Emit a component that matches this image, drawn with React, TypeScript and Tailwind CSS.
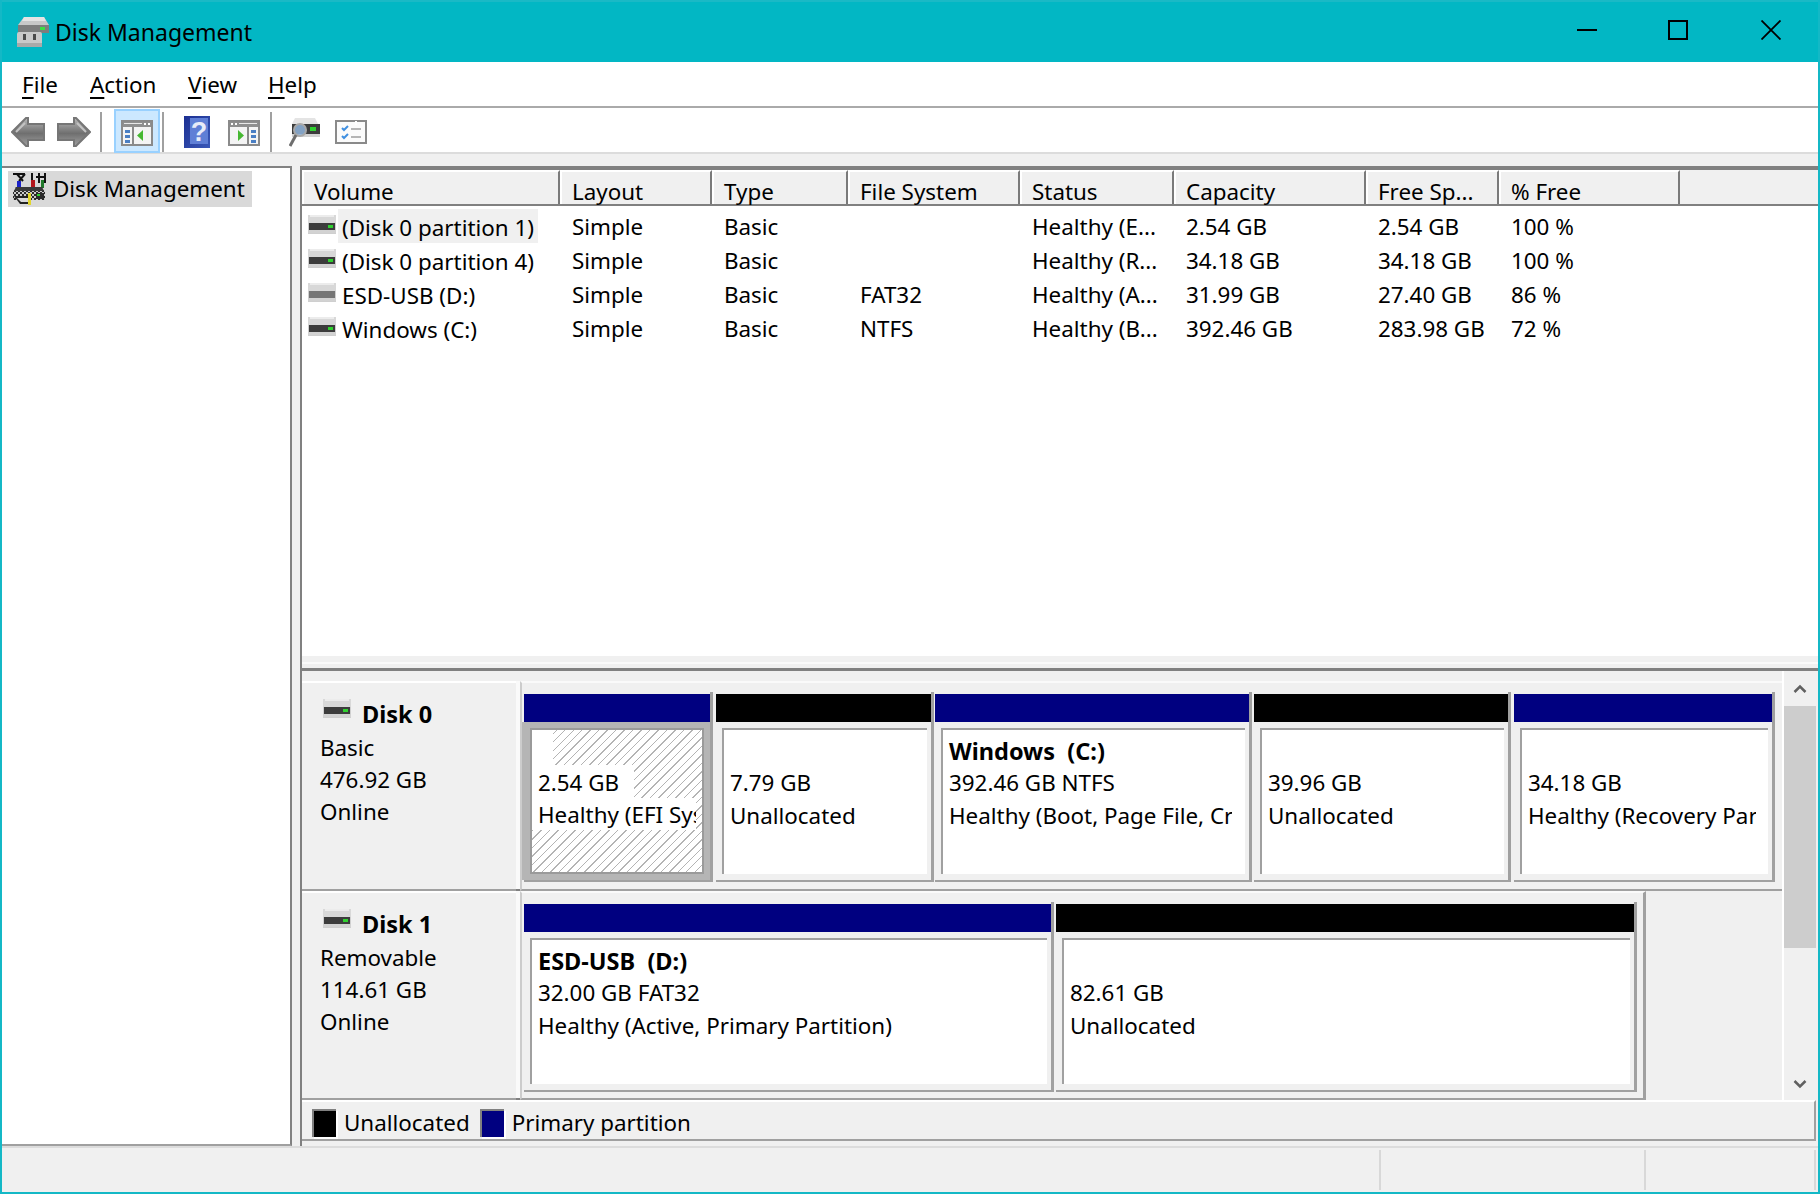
import React from "react";

const COLS = [
  { name: "Volume", w: "w-[258px]" },
  { name: "Layout", w: "w-[152px]" },
  { name: "Type", w: "w-[136px]" },
  { name: "File System", w: "w-[172px]" },
  { name: "Status", w: "w-[154px]" },
  { name: "Capacity", w: "w-[192px]" },
  { name: "Free Sp...", w: "w-[133px]" },
  { name: "% Free", w: "w-[181px]" },
];

const ROWS = [
  { led: true, selected: true, cells: ["(Disk 0 partition 1)", "Simple", "Basic", "", "Healthy (E...", "2.54 GB", "2.54 GB", "100 %"] },
  { led: true, selected: false, cells: ["(Disk 0 partition 4)", "Simple", "Basic", "", "Healthy (R...", "34.18 GB", "34.18 GB", "100 %"] },
  { led: false, selected: false, cells: ["ESD-USB (D:)", "Simple", "Basic", "FAT32", "Healthy (A...", "31.99 GB", "27.40 GB", "86 %"] },
  { led: true, selected: false, cells: ["Windows (C:)", "Simple", "Basic", "NTFS", "Healthy (B...", "392.46 GB", "283.98 GB", "72 %"] },
];

function DriveIcon({ led = true }: { led?: boolean }) {
  return (
    <svg width="28" height="20" viewBox="0 0 28 20" className="shrink-0">
      <path d="M3 0h22l3 6v13H0V6z" fill="#cfcfcf" />
      <rect x="0" y="0" width="28" height="8" fill="#d8d8d8" />
      <rect x="2" y="0" width="24" height="2" fill="#ececec" />
      <rect x="1" y="8" width="26" height="7" fill={led ? "#3c3c3c" : "#767676"} />
      {led && <rect x="20" y="10" width="5" height="3" fill="#2fd12f" />}
      <rect x="0" y="15" width="28" height="3" fill="#d2d2d2" />
    </svg>
  );
}

function TitleIcon() {
  return (
    <svg width="34" height="32" viewBox="0 0 34 32" className="shrink-0">
      <path d="M8 1h20l5 8v8H2V9z" fill="#c8c8c8" />
      <path d="M8 1h20l2 4H6z" fill="#e4e4e4" />
      <rect x="2" y="9" width="31" height="8" fill="#7d7d7d" />
      <rect x="24" y="11" width="5" height="3" fill="#3ddc45" />
      <rect x="1" y="16" width="25" height="15" rx="2" fill="#c9c9c9" />
      <rect x="7" y="18" width="3" height="6" fill="#4a4a4a" />
      <rect x="17" y="18" width="3" height="6" fill="#4a4a4a" />
      <rect x="1" y="27" width="25" height="4" fill="#a9a9a9" />
    </svg>
  );
}

function TreeIcon() {
  return (
    <svg width="34" height="34" viewBox="0 0 34 34" className="shrink-0">
      <defs>
        <pattern id="dither" width="4" height="4" patternUnits="userSpaceOnUse">
          <rect width="4" height="4" fill="#c8c8c8" />
          <rect width="2" height="2" fill="#2a2a2a" />
          <rect x="2" y="2" width="2" height="2" fill="#2a2a2a" />
        </pattern>
      </defs>
      <path d="M1 2h12M5 2l6 7M13 2L7 9M20 1v10M27 1v10M33 1v10M24 5h8" stroke="#111" strokeWidth="2" />
      <rect x="5" y="9" width="4" height="7" fill="#1b22c8" />
      <rect x="19" y="8" width="4" height="8" fill="#b4161c" />
      <rect x="29" y="8" width="3" height="8" fill="#1f7a2a" />
      <path d="M4 15h26l3 5v8H1v-8z" fill="url(#dither)" />
      <path d="M4 15h26l2 4H2z" fill="#3a3a3a" />
      <rect x="24" y="21" width="8" height="6" fill="#2b2b2b" />
      <rect x="25" y="22" width="3" height="2" fill="#2fd12f" />
      <path d="M2 24l6 8h10v-8z" fill="#222" />
      <path d="M5 26l4 4h7v-4z" fill="#d8d8d8" />
      <rect x="16" y="21" width="3" height="12" fill="#e2d62c" />
    </svg>
  );
}

function ArrowIcon({ flip = false }: { flip?: boolean }) {
  const id = flip ? "arrowR" : "arrowL";
  return (
    <svg width="34" height="30" viewBox="0 0 34 30" className={flip ? "shrink-0 -scale-x-100" : "shrink-0"}>
      <defs>
        <linearGradient id={id} x1="0" y1="0" x2="0" y2="1">
          <stop offset="0" stopColor="#b9b9b9" />
          <stop offset="0.55" stopColor="#6f6f6f" />
          <stop offset="1" stopColor="#a0a0a0" />
        </linearGradient>
      </defs>
      <path d="M1 15L15 1h2v6h16v16H17v6h-2z" fill={`url(#${id})`} stroke="#767676" strokeWidth="2" />
      <path d="M5 15L14 6" stroke="#c4c4c4" strokeWidth="2" />
    </svg>
  );
}

function PaneIcon({ flip = false }: { flip?: boolean }) {
  return (
    <svg width="32" height="26" viewBox="0 0 32 26" className={flip ? "shrink-0 -scale-x-100" : "shrink-0"}>
      <rect x="1" y="1" width="30" height="24" fill="#f4f4f4" stroke="#8a8a8a" strokeWidth="2" />
      <rect x="2" y="2" width="28" height="5" fill="#8f8f8f" />
      <rect x="3" y="3" width="18" height="1" fill="#e8e8e8" />
      <rect x="23" y="3" width="2" height="2" fill="#fff" />
      <rect x="27" y="3" width="2" height="2" fill="#fff" />
      <rect x="11" y="7" width="2" height="18" fill="#8a8a8a" />
      <rect x="4" y="10" width="5" height="3" fill="#4a7fc4" />
      <rect x="4" y="15" width="5" height="3" fill="#4a7fc4" />
      <rect x="4" y="20" width="5" height="3" fill="#4a7fc4" />
      <path d="M22 10v11l-6-5.500z" fill="#46b832" />
    </svg>
  );
}

function HelpIcon() {
  return (
    <svg width="26" height="32" viewBox="0 0 26 32" className="shrink-0">
      <defs>
        <linearGradient id="helpBg" x1="0" y1="0" x2="1" y2="1">
          <stop offset="0" stopColor="#1b2f92" />
          <stop offset="1" stopColor="#3b59b8" />
        </linearGradient>
      </defs>
      <rect width="26" height="32" fill="url(#helpBg)" />
      <rect x="6" y="2" width="18" height="26" fill="#5f7fd6" />
      <text x="15" y="25" textAnchor="middle" fontFamily="'Liberation Sans', sans-serif" fontWeight="700" fontSize="27" fill="#e8ecf8">?</text>
    </svg>
  );
}

function ScanIcon() {
  return (
    <svg width="32" height="30" viewBox="0 0 32 30" className="shrink-0">
      <path d="M6 1h20l3 6H3z" fill="#e4e4e4" />
      <rect x="3" y="7" width="28" height="10" fill="#3c3c3c" />
      <rect x="21" y="10" width="6" height="4" fill="#2fd12f" />
      <rect x="3" y="17" width="28" height="3" fill="#d2d2d2" />
      <circle cx="11" cy="13" r="6" fill="#8fb4dc" fillOpacity="0.85" stroke="#a8a8a8" strokeWidth="2" />
      <path d="M7 18L1 29" stroke="#6e6e6e" strokeWidth="3" />
    </svg>
  );
}

function ChecklistIcon() {
  return (
    <svg width="32" height="24" viewBox="0 0 32 24" className="shrink-0">
      <rect x="1" y="1" width="30" height="22" fill="#fbfbfb" stroke="#8a8a8a" strokeWidth="2" />
      <rect x="20" y="1" width="2" height="4" fill="#fff" />
      <path d="M7 8l2 2 4-4M7 16l2 2 4-4" fill="none" stroke="#3f8fe0" strokeWidth="2" />
      <path d="M16 9h10M16 17h10" stroke="#b5b5b5" strokeWidth="2" />
    </svg>
  );
}

function Accel({ k, rest }: { k: string; rest: string }) {
  return (
    <span>
      <span className="underline decoration-[1.5px] underline-offset-[4px]">{k}</span>
      {rest}
    </span>
  );
}

function Partition({ w, barW, color, name, size, status, selected, hatchWidths, pad = "pr-[8px]" }: {
  w: string;
  barW: string;
  color: string;
  name?: string;
  size: string;
  status: string;
  selected?: boolean;
  hatchWidths?: string[];
  pad?: string;
}) {
  return (
    <div className={`${w} shrink-0`}>
      <div className={`h-[190px] pt-[2px] flex flex-col border-r-[3px] border-b-2 border-[#a0a0a0] ${barW}`}>
        <div className={`h-[28px] ${color}`} />
        {selected && hatchWidths ? (
          <div className="flex-1 -ml-[2px] p-[6px] pl-[8px] pb-[6px] bg-[#b5b5b5] min-h-0">
            <div className="h-full border-2 border-[#9a9a9a] bg-[repeating-linear-gradient(135deg,#ffffff_0px,#ffffff_5px,#b4b4b4_5px,#b4b4b4_6px)]">
              <div className={`h-[35px] bg-white ${hatchWidths[0]}`} />
              <div className={`h-[33px] pl-[6px] leading-[35px] bg-white ${hatchWidths[1]}`}>{size}</div>
              <div className={`h-[32px] pl-[6px] leading-[33px] bg-white whitespace-nowrap overflow-hidden ${hatchWidths[2]}`}>{status}</div>
            </div>
          </div>
        ) : (
          <div className="flex-1 pl-[6px] pt-[6px] pr-[4px] pb-[6px] min-h-0">
            <div className="h-full border-l-2 border-t-2 border-[#a0a0a0] bg-white pt-[3px] leading-[34px]">
              <div className="h-[33px] pl-[6px] pt-[1px] font-bold text-[23.5px] whitespace-pre">{name ?? ""}</div>
              <div className="h-[33px] pl-[6px] whitespace-nowrap">{size}</div>
              <div className={`h-[33px] ml-[6px] ${pad} overflow-hidden`}>
                <div className="whitespace-nowrap">{status}</div>
              </div>
            </div>
          </div>
        )}
      </div>
    </div>
  );
}

function DiskLabel({ title, lines }: { title: string; lines: string[] }) {
  return (
    <>
      <div className="w-[214px] shrink-0 border-t-2 border-white border-b-2 border-b-[#a0a0a0] pl-[18px] pt-[14px]">
        <div className="flex items-start h-[34px] pl-[3px]">
          <div className="mt-[2px]"><DriveIcon /></div>
          <span className="ml-[11px] mt-[1px] font-bold text-[23.5px] leading-[33px]">{title}</span>
        </div>
        {lines.map((line) => (
          <div key={line} className="h-[32px] leading-[33px]">{line}</div>
        ))}
      </div>
      <div className="w-[4px] shrink-0 bg-[#fafafa] border-b-2 border-[#808080]" />
    </>
  );
}

export default function App() {
  return (
    <div className="w-[1820px] h-[1194px] flex flex-col bg-[#f0f0f0] border-x-2 border-b-2 border-[#14b8c6] overflow-hidden text-black text-[22.4px] font-['Noto_Sans',sans-serif]">
      <div className="h-[62px] shrink-0 bg-[#02b7c4] border-t-2 border-[#1ab9c6] flex items-center pl-[14px]">
        <TitleIcon />
        <span className="ml-[5px] text-[23px]">Disk Management</span>
        <div className="ml-auto flex items-center pb-[4px]">
          <svg width="20" height="20" viewBox="0 0 20 20" className="mr-[71px]">
            <rect x="0" y="9" width="20" height="2" fill="#000" />
          </svg>
          <svg width="20" height="20" viewBox="0 0 20 20" className="mr-[73px]">
            <rect x="1" y="1" width="18" height="18" fill="none" stroke="#000" strokeWidth="2" />
          </svg>
          <svg width="20" height="20" viewBox="0 0 20 20" className="mr-[37px]">
            <path d="M0.500 0.500L19.500 19.500M19.500 0.500L0.500 19.500" stroke="#000" strokeWidth="1.800" />
          </svg>
        </div>
      </div>

      <div className="h-[46px] shrink-0 bg-white border-b-2 border-[#aaaaaa] flex items-center pl-[20px] pt-[2px]">
        <div className="w-[68px]"><Accel k="F" rest="ile" /></div>
        <div className="w-[98px]"><Accel k="A" rest="ction" /></div>
        <div className="w-[80px]"><Accel k="V" rest="iew" /></div>
        <div><Accel k="H" rest="elp" /></div>
      </div>

      <div className="h-[46px] shrink-0 bg-white border-b-2 border-[#dcdcdc] flex items-center pl-[9px] pt-[4px]">
        <ArrowIcon />
        <div className="ml-[12px]"><ArrowIcon flip /></div>
        <div className="w-[2px] h-[40px] ml-[9px] bg-[#a0a0a0]" />
        <div className="ml-[12px] -mt-[3px] w-[46px] h-[44px] bg-[#cce8ff] border-2 border-[#99d1ff] flex items-center justify-center pt-[4px]">
          <PaneIcon />
        </div>
        <div className="w-[2px] h-[40px] ml-[2px] bg-[#a0a0a0]" />
        <div className="ml-[20px]"><HelpIcon /></div>
        <div className="ml-[18px] mt-[2px]"><PaneIcon flip /></div>
        <div className="w-[2px] h-[40px] ml-[10px] bg-[#a0a0a0]" />
        <div className="ml-[17px]"><ScanIcon /></div>
        <div className="ml-[14px]"><ChecklistIcon /></div>
      </div>

      <div className="flex-1 flex pt-[12px] min-h-0">
        <div className="w-[290px] shrink-0 bg-white border-t-2 border-r-2 border-b-2 border-t-[#828282] border-r-[#828282] border-b-[#a0a0a0] pl-[6px] pt-[3px]">
          <div className="w-[244px] h-[36px] bg-[#d9d9d9] flex items-center pl-[4px] leading-[38px]">
            <TreeIcon />
            <span className="ml-[7px]">Disk Management</span>
          </div>
        </div>

        <div className="ml-[8px] flex-1 min-w-0 flex flex-col border-l-2 border-[#808080] pb-[5px]">
          <div className="h-[505px] shrink-0 flex flex-col border-t-[4px] border-b-[3px] border-[#808080]">
            <div className="h-[36px] shrink-0 flex border-b-2 border-[#808080] bg-[#f0f0f0]">
              {COLS.map((col) => (
                <div key={col.name} className={`${col.w} shrink-0 border-t-2 border-l-2 border-white border-r-2 border-r-[#7a7a7a] pl-[10px] leading-[40px] whitespace-nowrap`}>
                  {col.name}
                </div>
              ))}
            </div>
            <div className="flex-1 bg-white pt-[3px]">
              {ROWS.map((row) => (
                <div key={row.cells[0]} className="h-[34px] flex items-center">
                  {row.cells.map((cell, i) => (
                    <div key={COLS[i].name} className={`${COLS[i].w} shrink-0 whitespace-nowrap ${i === 0 ? "flex items-center pl-[6px]" : "pl-[12px] pt-[2px]"}`}>
                      {i === 0 ? (
                        <>
                          <div className="-mt-[2px]"><DriveIcon led={row.led} /></div>
                          <span className={`ml-[2px] pl-[4px] pr-[4px] h-[34px] leading-[37px] ${row.selected ? "bg-[#f0f0f0]" : ""}`}>{cell}</span>
                        </>
                      ) : cell}
                    </div>
                  ))}
                </div>
              ))}
            </div>
            <div className="h-[12px] shrink-0 bg-[#f0f0f0] pt-[6px]">
              <div className="h-[2px] bg-[#fafafa]" />
            </div>
          </div>

          <div className="h-[429px] shrink-0 flex">
            <div className="flex-1 min-w-0">
              <div className="mt-[10px] h-[210px] flex">
                <DiskLabel title="Disk 0" lines={["Basic", "476.92 GB", "Online"]} />
                <div className="flex-1 min-w-0 flex border-l-2 border-l-[#cccccc] border-b-2 border-b-[#a0a0a0] border-t-2 border-t-[#fafafa] pt-[9px] pl-[2px]">
                  <Partition w="w-[192px]" barW="w-[189px]" color="bg-[#000080]" size="2.54 GB" status="Healthy (EFI System Partition)" selected hatchWidths={["w-[21px]", "w-[102px]", "w-[164px]"]} />
                  <Partition w="w-[219px]" barW="w-[218px]" color="bg-black" size="7.79 GB" status="Unallocated" />
                  <Partition w="w-[319px]" barW="w-[317px]" color="bg-[#000080]" name="Windows  (C:)" size="392.46 GB NTFS" status="Healthy (Boot, Page File, Crash Dump, Primary Partition)" pad="mr-[13px]" />
                  <Partition w="w-[260px]" barW="w-[257px]" color="bg-black" size="39.96 GB" status="Unallocated" />
                  <Partition w="w-[261px]" barW="w-[261px]" color="bg-[#000080]" size="34.18 GB" status="Healthy (Recovery Partition)" pad="mr-[12px]" />
                </div>
              </div>
              <div className="h-[209px] flex">
                <DiskLabel title="Disk 1" lines={["Removable", "114.61 GB", "Online"]} />
                <div className="w-[1126px] shrink-0 flex border-l-2 border-l-[#cccccc] border-r-[3px] border-r-[#a0a0a0] border-b-2 border-b-[#a0a0a0] border-t-2 border-t-[#fafafa] pt-[9px] pl-[2px]">
                  <Partition w="w-[532px]" barW="w-[530px]" color="bg-[#000080]" name="ESD-USB  (D:)" size="32.00 GB FAT32" status="Healthy (Active, Primary Partition)" />
                  <Partition w="w-[581px]" barW="w-[581px]" color="bg-black" size="82.61 GB" status="Unallocated" />
                </div>
              </div>
            </div>
            <div className="w-[36px] shrink-0 border-l-2 border-white pr-[2px] flex flex-col">
              <div className="h-[35px] shrink-0 flex items-center justify-center">
                <svg width="14" height="10" viewBox="0 0 14 10">
                  <path d="M1.500 8L7 2.500L12.500 8" fill="none" stroke="#606060" strokeWidth="2.500" />
                </svg>
              </div>
              <div className="h-[242px] shrink-0 bg-[#cdcdcd]" />
              <div className="flex-1 flex items-end justify-center pb-[11px]">
                <svg width="14" height="10" viewBox="0 0 14 10">
                  <path d="M1.500 2L7 7.500L12.500 2" fill="none" stroke="#606060" strokeWidth="2.500" />
                </svg>
              </div>
            </div>
          </div>

          <div className="flex-1 min-h-0 mr-[2px] border-t-2 border-white border-b-2 border-b-[#a0a0a0] border-r-2 border-r-[#a0a0a0] flex items-center pl-[10px] pt-[4px]">
            <div className="w-[24px] h-[28px] border-l-2 border-t-2 border-[#808080] bg-black shadow-[2px_2px_0_#fff]" />
            <span className="ml-[8px]">Unallocated</span>
            <div className="ml-[10px] w-[24px] h-[28px] border-l-2 border-t-2 border-[#808080] bg-[#000080] shadow-[2px_2px_0_#fff]" />
            <span className="ml-[8px]">Primary partition</span>
          </div>
        </div>
      </div>

      <div className="h-[46px] shrink-0 border-t-2 border-[#dcdcdc] flex py-[2px]">
        <div className="flex-1 border-r-2 border-[#d8d8d8]" />
        <div className="w-[265px] shrink-0 border-r-2 border-[#d8d8d8]" />
        <div className="w-[170px] shrink-0 border-r-2 border-[#d8d8d8]" />
        <div className="w-[2px] shrink-0" />
      </div>
    </div>
  );
}
